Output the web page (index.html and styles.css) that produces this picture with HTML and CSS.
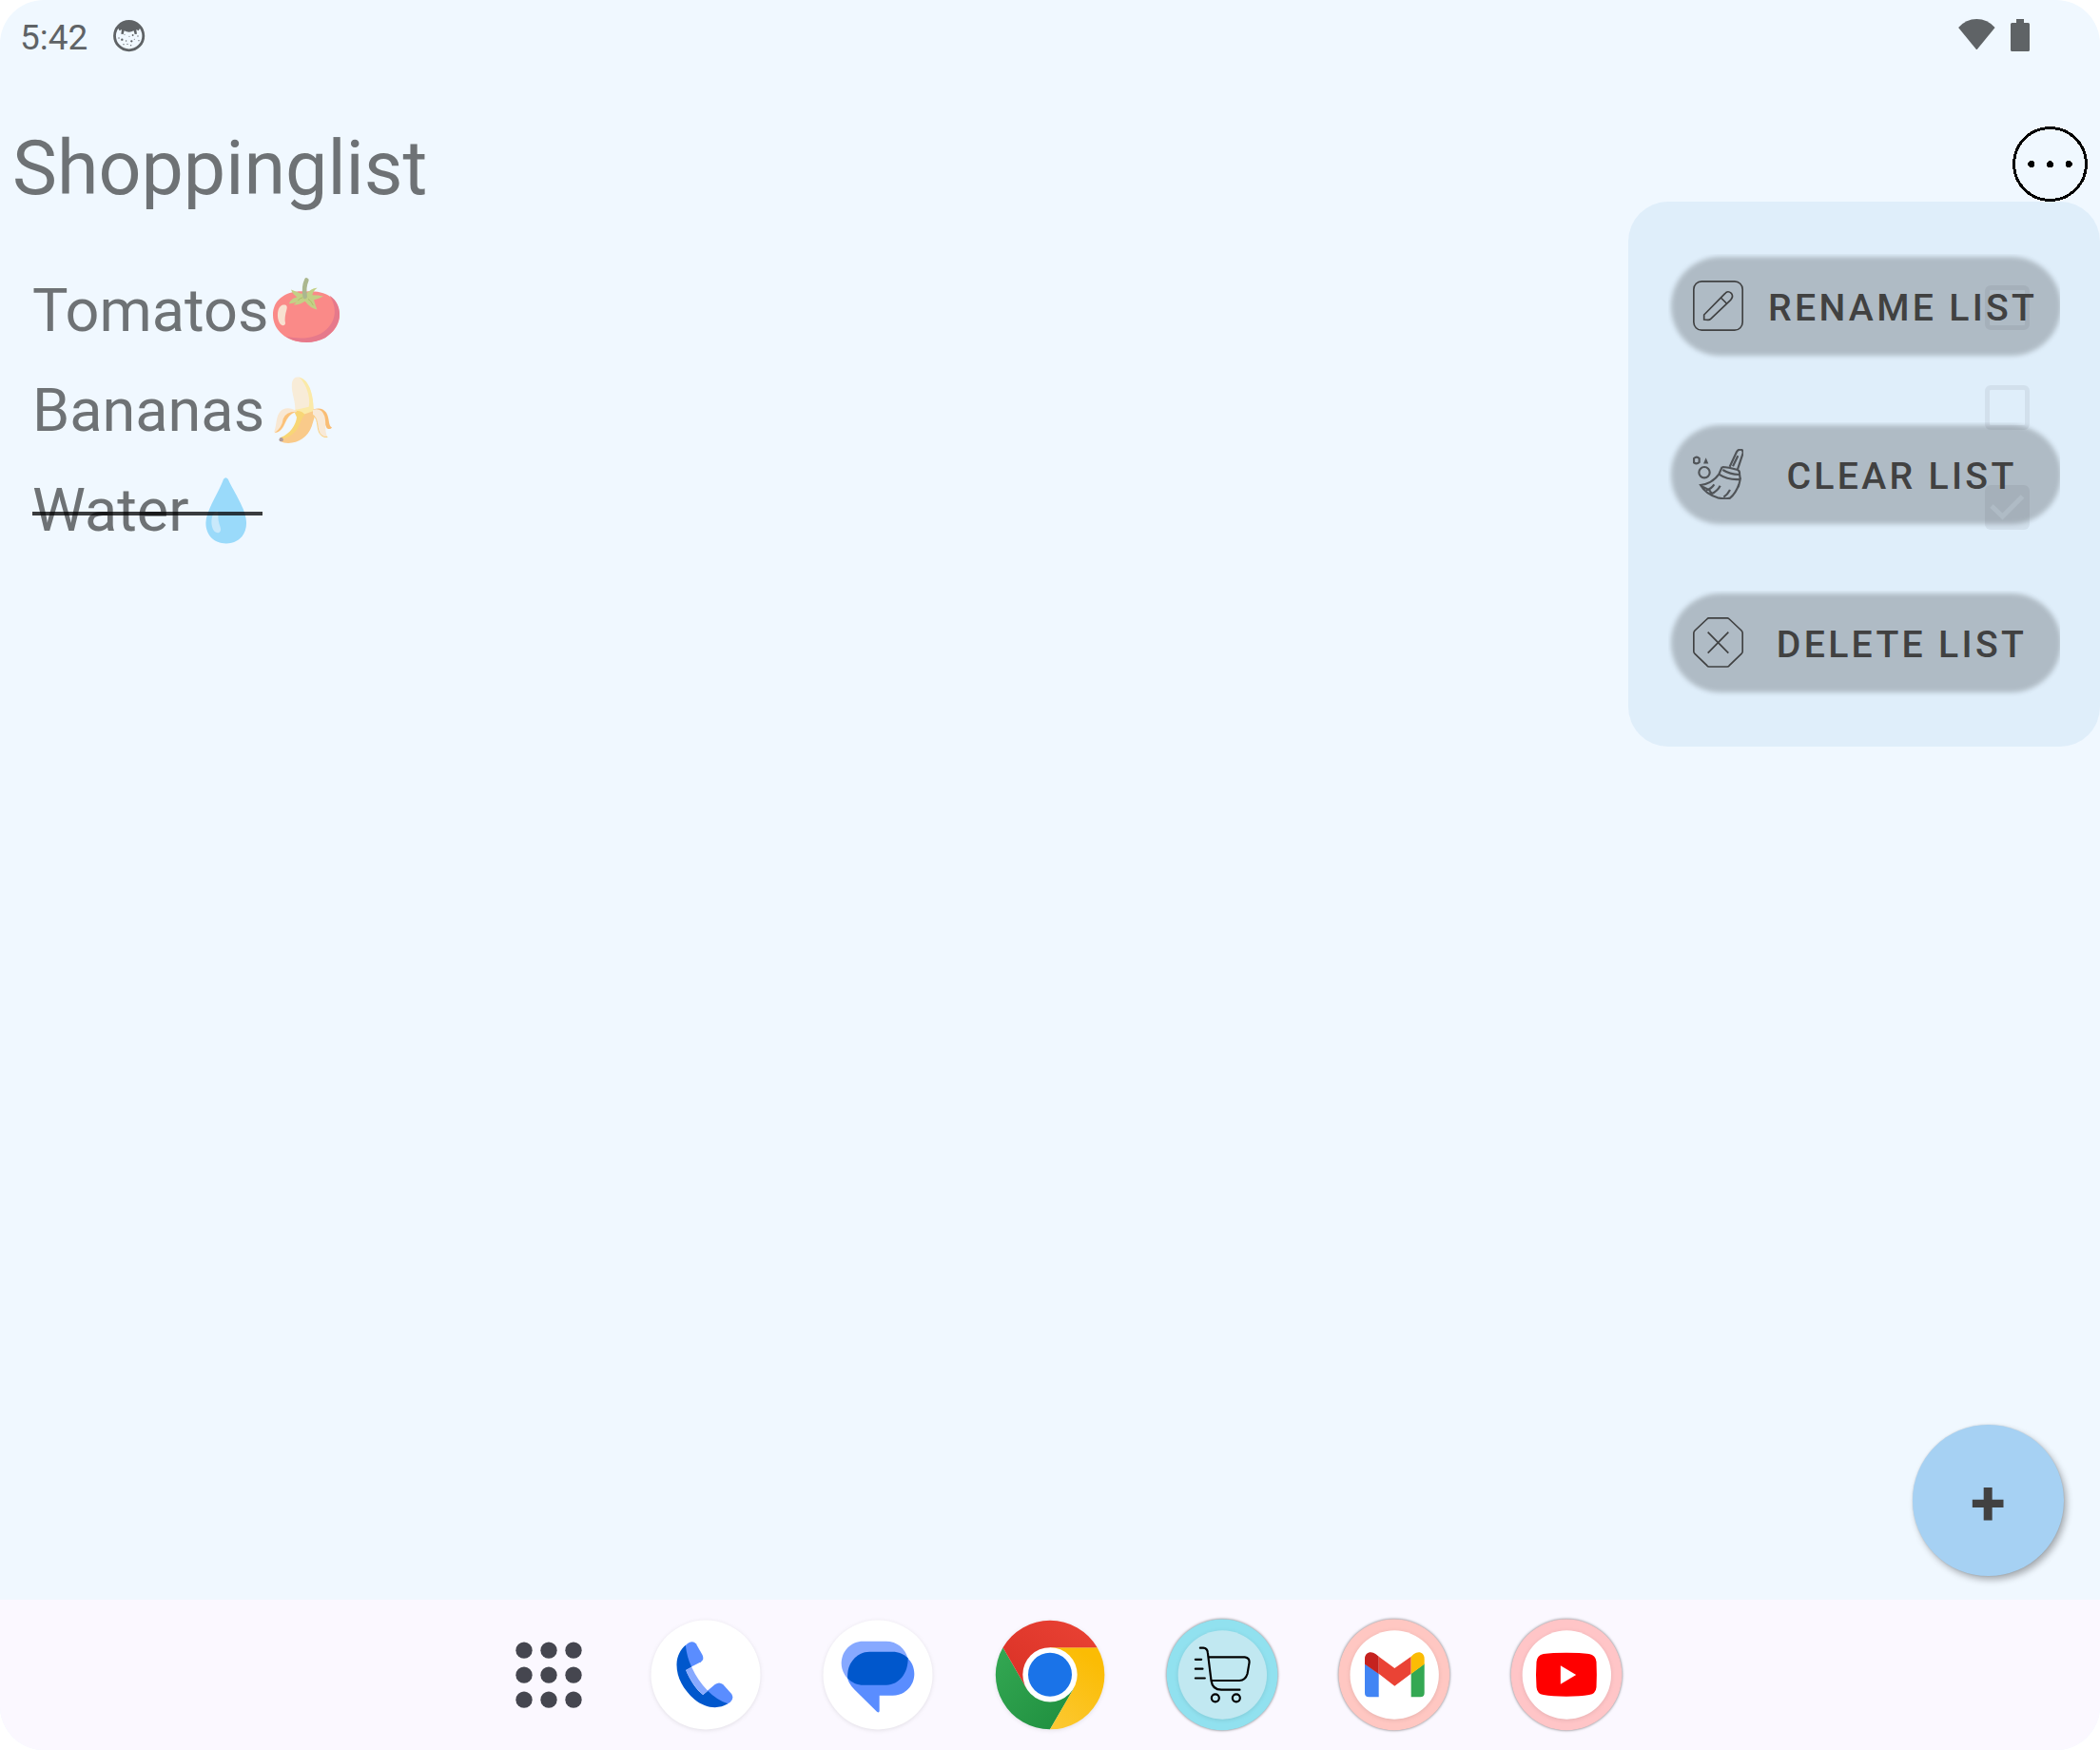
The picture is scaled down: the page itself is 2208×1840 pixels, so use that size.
FILE: index.html
```html
<!DOCTYPE html>
<html lang="en">
<head>
<meta charset="utf-8">
<title>Shoppinglist</title>
<link rel="stylesheet" href="styles.css">
</head>
<body>
<div class="screen">
  <header class="status">
    <span class="clock">5:42</span>
    <svg class="cat" viewBox="358 64 100 100">
      <circle cx="408" cy="114" r="45.500" fill="none" stroke="#5f6366" stroke-width="8.500"/>
      <path d="M370 84Q408 52 446 84L438 98 431 94 433 108 426 109 423 98Q408 106 393 98L390 109 383 108 385 94 378 98Z" fill="#5f6366"/>
      <g fill="#5f6366"><circle cx="386" cy="126" r="3.5"/><circle cx="416" cy="131" r="3.5"/><circle cx="420" cy="112" r="2.8"/><circle cx="376" cy="121" r="2"/><circle cx="399" cy="130" r="2"/><circle cx="409" cy="116" r="1.6"/><circle cx="436" cy="115" r="2"/><circle cx="439" cy="129" r="2"/><circle cx="403" cy="140" r="2"/><circle cx="414" cy="144" r="2"/><circle cx="391" cy="141" r="2"/><circle cx="425" cy="125" r="1.6"/><circle cx="394" cy="110" r="1.6"/></g>
    </svg>
    <svg class="wifi" viewBox="298 60 116 98"><path d="M298 87Q322 60 356 60T414 87L356 158Z" fill="#5f6366"/></svg>
    <svg class="battery" viewBox="0 0 20 34"><path d="M6 0H14V4H18.5Q20 4 20 5.500V32.500Q20 34 18.500 34H1.500Q0 34 0 32.500V5.500Q0 4 1.500 4H6Z" fill="#5f6366"/></svg>
  </header>

  <div class="titlebar">
    <h1 class="title">Shoppinglist</h1>
    <svg class="more" viewBox="468 399 237 237" shape-rendering="crispEdges">
      <circle cx="586.5" cy="517.5" r="114" fill="none" stroke="#000" stroke-width="9"/>
      <circle cx="527" cy="517.5" r="10.500"/><circle cx="586.5" cy="517.5" r="10.500"/><circle cx="646" cy="517.5" r="10.500"/>
    </svg>
  </div>

  <main class="list">
    <div class="row">
      <span class="name">Tomatos<svg class="emoji" viewBox="846 82.5 234 234">
        <path d="M966 138C1035 132 1071 168 1071 212C1071 262 1020 298 965 298C905 298 861 260 861 212C861 165 900 133 966 138Z" fill="#fa8a88"/>
        <path d="M1040 151C1088 185 1078 250 1026 284C987 305 935 302 902 280C955 291 1000 285 1030 257C1060 228 1064 190 1040 151Z" fill="#e6798b"/>
        <path d="M890 181C902 178 908 182 904 196C900 210 897 225 900 238C900 247 888 248 882 238C872 220 874 187 890 181Z" fill="#f8e1d0"/>
        <path d="M918 132Q934 138 948 144L962 146 982 132Q992 126 1001 127 988 136 985 149 1003 149 1020 153 1008 160 990 164 994 178 1000 195 980 192 962 169 946 181 926 180L935 172Q922 177 911 176 920 158 937 156 922 145 918 132Z" fill="#c3d086"/>
        <path d="M962 154Q957 124 967 102" fill="none" stroke="#abb78f" stroke-width="14" stroke-linecap="round"/>
        <path d="M940 167Q945 158 955 157M972 162Q980 165 988 182" fill="none" stroke="#aebf68" stroke-width="3"/>
      </svg></span><i class="box"></i>
    </div>
    <div class="row">
      <span class="name">Bananas<svg class="emoji" viewBox="834 397.5 234 234">
        <path d="M940 408C970 410 988 460 989 507L990 530 930 525C936 485 917 460 921 425Q925 407 940 408Z" fill="#f8ecd8"/>
        <path d="M940 408C974 412 988 460 989 507L1000 520 975 545 930 518Q928 508 938 510 960 505 974 502C982 470 960 415 940 408Z" fill="#fbeaa8"/>
        <path d="M930 514L960 525 1000 511Q990 540 983 564C970 600 932 622 896 615Q880 611 885 600C920 590 934 560 938 536Z" fill="#f9ca8a"/>
        <path d="M928 516Q950 511 962 527C945 540 948 570 922 588Q906 601 888 603L886 598C915 587 933 560 936 535Z" fill="#f8d676"/>
        <path d="M937 517C895 530 905 572 875 583Q865 586 865 579C875 560 867 515 900 507Q922 504 937 517Z" fill="#f8e8d4"/>
        <path d="M936 517C890 530 907 577 866 584Q890 567 893 540Q902 516 936 517Z" fill="#fbc27a"/>
        <path d="M987 511Q1014 500 1029 520C1041 540 1034 561 1047 567Q1042 575 1031 569L1020 545Z" fill="#f9bd75"/>
        <path d="M987 511Q1015 504 1024 532C1030 558 1023 580 1033 596Q1017 603 1008 583C999 560 1005 542 987 528Z" fill="#f8e9d7"/>
        <path d="M988 527C1008 546 996 574 1013 591Q1021 599 1033 597" fill="none" stroke="#fad080" stroke-width="3"/>
        <circle cx="887" cy="605" r="6.500" fill="#b19c99"/>
      </svg></span><i class="box"></i>
    </div>
    <div class="row">
      <span class="name done">Water<svg class="emoji" viewBox="595.8 712.5 234 234">
        <path d="M704 730Q711 721 718 730C735 768 776 825 776 868C776 907 750 933 712 933C674 933 648 907 648 868C648 830 688 774 704 730Z" fill="#9adafa"/>
        <path d="M684 831C690 838 684 850 690 870C694 883 700 894 688 899C673 902 665 880 666 862Q667 835 684 831Z" fill="#c9e9fb"/>
      </svg></span><i class="box checked"><svg viewBox="0 0 47 47"><path d="M7 22L18.500 33 39.500 12" fill="none" stroke="#f0f8ff" stroke-width="5"/></svg></i>
    </div>
  </main>

  <aside class="menu">
    <button class="action">
      <svg class="glyph" viewBox="240 315 159 159" fill="none" stroke="#404142" stroke-width="5"><rect x="242.5" y="317.5" width="154" height="154" rx="25"/><path d="M275 438V423L341 356Q350 345 361 355 369 365 359 376L296 436Q293 439 288 439ZM328 369L346 387"/></svg>
      <span class="label">RENAME LIST</span>
    </button>
    <button class="action">
      <svg class="glyph" viewBox="240 846 159 159" fill="none" stroke="#505458" stroke-width="6.500"><path d="M356 902L378 855Q383 846 394 849 400 853 397 862L381 910M366 901L382 868M332 903Q350 903 381 912 388 915 387 925L389 940M332 903L322 926Q350 945 389 942L387 951 383 967M334 912Q356 926 386 927M322 926Q300 956 264 960 280 988 318 1000 342 1005 357 1001 375 986 385 958M282 976Q298 972 307 958M298 988Q318 978 326 962M337 998Q350 989 357 975M270 965L292 976 300 989"/><circle cx="276" cy="920" r="17"/><path d="M243 876Q252 868 260 876V888Q252 896 243 889ZM281 882L278 889H284Z"/></svg>
      <span class="label">CLEAR LIST</span>
    </button>
    <button class="action">
      <svg class="glyph" viewBox="240 507 159 159" fill="none" stroke="#404142" stroke-width="5"><path d="M290 509.500H349Q352 510 355 513L393 549Q396.500 553 396.500 557V615Q396.500 619 393 622L355 659Q352 663 348 663H291Q287 663 284 659L246 622Q242.500 619 242.500 615V557Q242.500 553 246 549L284 513Q287 509.500 290 509.500ZM287 554L352 620M352 554L287 620"/></svg>
      <span class="label">DELETE LIST</span>
    </button>
  </aside>

  <button class="fab">+</button>

  <nav class="dock">
    <svg class="apps" viewBox="46 115 252 252" fill="#45464f"><circle cx="94" cy="163.500" r="26"/><circle cx="172" cy="163.500" r="26"/><circle cx="250" cy="163.500" r="26"/><circle cx="94" cy="241.500" r="26"/><circle cx="172" cy="241.500" r="26"/><circle cx="250" cy="241.500" r="26"/><circle cx="94" cy="319.500" r="26"/><circle cx="172" cy="319.500" r="26"/><circle cx="250" cy="319.500" r="26"/></svg>
    <svg class="app soft" viewBox="493.5 67 348 348">
      <circle cx="667.5" cy="241" r="172.500" fill="#fff"/>
      <path d="M604 148C614 137 628 131 637 143L657 178Q664 192 653 200L621 216 604 190Z" fill="#5a8dff"/>
      <path d="M672 292L697 271Q710 262 722 271L749 301Q758 315 745 327L733 335 700 325Z" fill="#5a8dff"/>
      <path d="M604 147Q608 185 623 216L605 226C618 258 638 288 659 304L674 291Q700 318 737 332C705 352 665 345 632 318C598 289 575 250 576 207C577 181 588 160 604 147Z" fill="#0057cc"/>
      <path d="M605 226L623 216Q642 258 674 291L659 304C638 286 618 258 605 226Z" fill="#87a9ff"/>
    </svg>
    <svg class="app soft" viewBox="1036 67 348 348">
      <circle cx="1210" cy="241" r="172.500" fill="#fff"/>
      <path d="M1163 135H1236C1270 135 1297 158 1304 188L1125 260C1108 250 1095 228 1095 204C1095 166 1125 135 1163 135Z" fill="#87a9ff"/>
      <path d="M1303 187C1317 200 1325 218 1325 238C1325 276 1295 306 1257 306H1215V356Q1213 362 1207 357L1137 288Q1114 266 1114 244Z" fill="#5a8dff"/>
      <path d="M1184 168H1256C1276 168 1292 175 1305 188C1306 236 1276 273 1237 273H1165C1144 273 1128 265 1115 252C1110 207 1142 168 1184 168Z" fill="#0057cc"/>
    </svg>
    <svg class="app soft" viewBox="139 67 348 348">
      <defs>
        <linearGradient id="red" x1="0" y1="1" x2="1" y2="0"><stop offset="0" stop-color="#d93025"/><stop offset="1" stop-color="#ea4335"/></linearGradient>
        <linearGradient id="yellow" x1="0" y1="1" x2=".5" y2="0"><stop offset="0" stop-color="#fcc934"/><stop offset="1" stop-color="#fbbc04"/></linearGradient>
        <linearGradient id="green" x1="1" y1="1" x2="0" y2="0"><stop offset="0" stop-color="#1e8e3e"/><stop offset="1" stop-color="#34a853"/></linearGradient>
      </defs>
      <path d="M164.500 155A172 172 0 0 0 313 413L388 284H239Z" fill="url(#green)"/>
      <path d="M462 155A172 172 0 0 1 313 413L388 284 313.500 155Z" fill="url(#yellow)"/>
      <path d="M164.500 155A172 172 0 0 1 462 155H313.500L239 284Z" fill="url(#red)"/>
      <circle cx="313" cy="240.500" r="86" fill="#fff"/><circle cx="313" cy="240" r="69" fill="#1a73e8"/>
    </svg>
    <svg class="app ringed" viewBox="681.5 67 348 348">
      <circle cx="855.5" cy="240.500" r="175" fill="#91e1ef"/><circle class="inner" cx="856.500" cy="241" r="140" fill="#c1e8f1"/>
      <g fill="none" stroke="#000" stroke-width="6.500" stroke-linecap="round" stroke-linejoin="round"><path d="M786 156H796Q809 157 810 171L821 259Q825 288 853 288H911M814 185H927Q943 187 941 203L935 238Q929 258 910 259H824M771 192.500H790M771 222H794M771 251.500H801"/><circle cx="834" cy="314" r="12"/><circle cx="900" cy="314" r="12"/></g>
    </svg>
    <svg class="app ringed" viewBox="85 67 348 348">
      <circle cx="258.500" cy="240.500" r="175" fill="#ffc7c2"/><circle class="inner" cx="259.500" cy="241" r="140" fill="#fff"/>
      <path d="M166 206L210 237V311H179Q166 311 166 298Z" fill="#4285f4"/><path d="M354 206L312 237V311H341Q354 311 354 298Z" fill="#34a853"/>
      <path d="M210 183L260 220 312 183V237L260 276 210 237Z" fill="#ea4335"/>
      <path d="M166 207V190C166 170 186 163 201 176L210 183V238Z" fill="#c5221f"/><path d="M354 207V190C354 170 335 163 320 176L312 183V238Z" fill="#fbbc04"/>
    </svg>
    <svg class="app ringed" viewBox="627.5 67 348 348">
      <circle cx="801.500" cy="240.500" r="175" fill="#ffc5c7"/><circle class="inner" cx="802.500" cy="241" r="140" fill="#fff"/>
      <path d="M801 171Q846 171 873 175 894 179 896 200 898 240 896 280 894 301 873 304 846 309 801 309 756 309 729 304 709 301 707 280 704 240 707 200 709 179 729 175 756 171 801 171Z" fill="#f00"/><path d="M783 212L832 241 783 270Z" fill="#fff"/>
    </svg>
  </nav>
</div>
</body>
</html>
```

FILE: styles.css
```css
* { box-sizing: border-box; }
body { margin: 0; background: #fff; font-family: Roboto, "Liberation Sans", sans-serif; }
svg { display: block; flex: none; }
button { border: 0; margin: 0; font-family: inherit; }

.screen {
  position: relative;
  display: flex;
  flex-direction: column;
  width: 2208px;
  height: 1840px;
  border-radius: 46px;
  overflow: hidden;
  background: #f0f8ff;
}

/* status bar */
.status { display: flex; align-items: center; height: 76px; padding: 0 74px 0 21px; color: #5f6366; }
.clock { font-size: 37px; line-height: 44px; margin-top: 3px; }
.cat { width: 33.3px; height: 33.3px; margin-left: 27px; }
.wifi { width: 38.700px; height: 32.500px; margin: 0 16px 4px auto; }
.battery { width: 20px; height: 34px; margin-bottom: 2px; }

/* heading */
.titlebar { display: flex; justify-content: space-between; align-items: flex-start; height: 198px; padding: 55px 13px 0; }
.title { margin: 0; font-size: 79px; line-height: 92px; font-weight: 400; color: #6e7275; }
.more { width: 79px; height: 79px; margin-top: 2px; }

/* shopping list */
.list { flex: 1; padding: 0 74px 0 34px; }
.row { display: flex; align-items: center; justify-content: space-between; height: 105px; }
.name { position: relative; display: flex; align-items: center; font-size: 63px; line-height: 105px; color: #6e7275; }
.emoji { width: 78px; height: 78px; }
.done::after { content: ""; position: absolute; left: 0; right: 1px; top: 54px; height: 4px; background: rgba(0, 0, 0, .76); }
.box { width: 47px; height: 47px; margin-bottom: 7px; border: 5px solid #6e7275; border-radius: 6px; }
.checked { border: 0; background: #6e7275; }

/* popup menu */
.menu {
  position: absolute;
  top: 212px;
  right: 0;
  display: flex;
  flex-direction: column;
  gap: 65px;
  width: 496px;
  height: 573px;
  padding: 55px 42px 0;
  border-radius: 42px;
  background: rgba(221, 236, 249, .9);
}
.action {
  position: relative;
  display: flex;
  flex: none;
  align-items: center;
  gap: 26px;
  height: 112px;
  padding: 0 26px 3px;
  overflow: hidden;
  background: none;
}
.action::before {
  content: "";
  position: absolute;
  inset: 3px -1px 5.500px 2.500px;
  border-radius: 52px;
  background: rgba(0, 0, 0, .21);
  filter: blur(2.500px);
}
.glyph { position: relative; width: 53px; height: 53px; }
.label {
  position: relative;
  flex: 1;
  margin-top: 5px;
  font-size: 39.200px;
  line-height: 46px;
  font-weight: 500;
  letter-spacing: 3.300px;
  white-space: nowrap;
  text-align: center;
  color: #414141;
}

.fab {
  position: absolute;
  top: 1498px;
  left: 2011px;
  width: 158.500px;
  height: 158.500px;
  padding: 6px 0 0;
  border-radius: 50%;
  background: #a6d1f3;
  box-shadow: 3px 4px 7px rgba(0, 0, 0, .3), 0 0 2px rgba(0, 0, 0, .15);
  font-size: 67px;
  font-weight: 700;
  line-height: 152px;
  color: #414141;
}

/* taskbar */
.dock { display: flex; align-items: center; gap: 65px; height: 158px; padding: 0 0 1px 535px; background: #fbf8ff; }
.apps { width: 84px; height: 84px; }
.app { width: 116px; height: 116px; overflow: visible; }
.soft { filter: drop-shadow(0 1px 2px rgba(0, 0, 0, .1)); }
.ringed { filter: drop-shadow(0 0 1.500px rgba(0, 0, 0, .55)); }
.inner { filter: drop-shadow(0 3px 6px rgba(0, 0, 0, .1)); }
```
